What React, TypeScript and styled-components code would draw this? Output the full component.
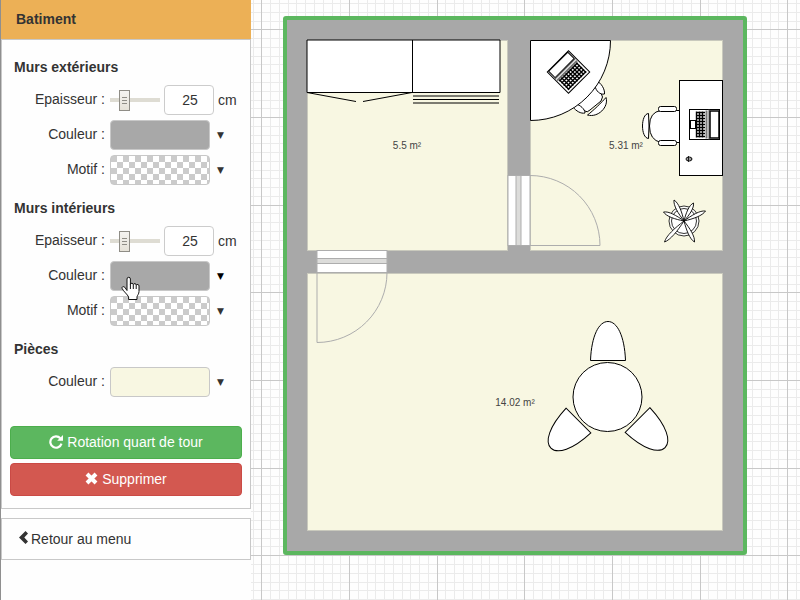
import React, { useId, useState } from "react";
import styled, { createGlobalStyle } from "styled-components";

const GlobalStyle = createGlobalStyle`
  *, *::before, *::after { box-sizing: border-box; }
  body {
    margin: 0;
    background: #fefefe;
    color: #333;
    font: 14px/20px "Liberation Sans", Arial, sans-serif;
  }
  button, input { font: inherit; color: inherit; }
`;

const Page = styled.div`
  display: flex;
  min-height: 100vh;
`;

const Sidebar = styled.aside`
  flex: 0 0 251px;
  border-left: 1px solid #8f8f8f;
  background: #fefefe;
`;

const Title = styled.h1`
  margin: 0;
  padding: 9px 15px 10px;
  background: #ecb056;
  font-size: 14px;
  line-height: 20px;
`;

const Panel = styled.section`
  padding: 17px 8px 12px;
  border: 1px solid #c8c8c8;
`;

const Group = styled.fieldset`
  display: flex;
  flex-direction: column;
  gap: 5px;
  min-width: 0;
  margin: 0 0 13px;
  padding: 0;
  border: 0;
`;

const Legend = styled.legend`
  padding: 0 4px 8px;
  font-weight: bold;
`;

const Row = styled.div`
  display: grid;
  grid-template-columns: 95px 1fr;
  column-gap: 5px;
  height: 30px;
`;

const Label = styled.label`
  padding-top: 4px;
  text-align: right;
`;

const Thickness = styled.div`
  display: flex;
  align-items: center;
  gap: 4px;
`;

const Slider = styled.input`
  appearance: none;
  width: 50px;
  height: 22px;
  margin: 0;
  background: linear-gradient(#dedcd3, #dedcd3) center / 100% 4px no-repeat;

  &::-webkit-slider-thumb {
    appearance: none;
    width: 11px;
    height: 21px;
    border: 1px solid #8f8d86;
    background:
      linear-gradient(#8f8d86, #8f8d86) center 6px / 5px 1px no-repeat,
      linear-gradient(#8f8d86, #8f8d86) center 9px / 5px 1px no-repeat,
      linear-gradient(#8f8d86, #8f8d86) center 12px / 5px 1px no-repeat,
      linear-gradient(#f4f3f0, #e6e2d8);
  }
`;

const SizeInput = styled.input`
  width: 50px;
  height: 30px;
  padding: 0 0 0 2px;
  border: 1px solid #ccc;
  border-radius: 4px;
  background: #fff;
  text-align: center;
`;

const Picker = styled.button`
  position: relative;
  display: flex;
  align-items: center;
  gap: 7px;
  padding: 0;
  border: 0;
  background: none;
  cursor: pointer;
`;

const Swatch = styled.span<{ $fill: string }>`
  width: 100px;
  height: 30px;
  border: 1px solid #c8c8c8;
  border-radius: 4px;
  background: ${(p) => p.$fill};
`;

const Caret = styled.span<{ $active?: boolean }>`
  color: ${(p) => (p.$active ? "#000" : "#333")};
  font: 9px/20px "DejaVu Sans", sans-serif;
`;

const Hand = styled.svg`
  position: absolute;
  left: 11px;
  top: 15px;
  z-index: 1;
`;

const Actions = styled.div`
  display: flex;
  flex-direction: column;
  gap: 4px;
  margin-top: 29px;
`;

const Action = styled.button<{ $tone: "success" | "danger" }>`
  display: flex;
  align-items: center;
  justify-content: center;
  gap: 4px;
  height: 33px;
  padding: 0 0 2px;
  border: 1px solid ${(p) => (p.$tone === "success" ? "#4cae4c" : "#ca4a45")};
  border-radius: 4px;
  background: ${(p) => (p.$tone === "success" ? "#5cb75f" : "#d35850")};
  color: #fff;
`;

const Back = styled.a`
  display: flex;
  align-items: center;
  gap: 3px;
  margin-top: 9px;
  padding: 10px 17px;
  border: 1px solid #c8c8c8;
  color: inherit;
  text-decoration: none;
`;

const BackIcon = styled.svg`
  margin-bottom: 4px;
`;

const Canvas = styled.main`
  flex: 1;
  min-width: 0;
  display: flex;
  overflow: hidden;
`;

const Drawing = styled.svg`
  flex: 1;
  min-width: 0;
  background: #fefefe;
`;

const AreaText = styled.text`
  font: 10px "Liberation Sans", Arial, sans-serif;
  fill: #444;
  text-anchor: middle;
`;

const CHECKER =
  "conic-gradient(#fff 25%, #cbcbcb 0 50%, #fff 0 75%, #cbcbcb 0) 0 0 / 12px 12px";

function ThicknessRow() {
  const id = useId();
  const [value, setValue] = useState("25");
  const change = (e: React.ChangeEvent<HTMLInputElement>) => setValue(e.target.value);
  return (
    <Row>
      <Label htmlFor={id}>Epaisseur :</Label>
      <Thickness>
        <Slider
          type="range"
          min={5}
          max={92}
          value={value}
          onChange={change}
          aria-label="Epaisseur"
        />
        <SizeInput id={id} value={value} onChange={change} />
        <span>cm</span>
      </Thickness>
    </Row>
  );
}

function PickerRow({ label, fill, hovered }: { label: string; fill: string; hovered?: boolean }) {
  const id = useId();
  return (
    <Row>
      <Label htmlFor={id}>{label} :</Label>
      <Picker id={id} type="button">
        <Swatch $fill={fill} />
        <Caret $active={hovered}>▼</Caret>
        {hovered && (
          <Hand width="20" height="25" viewBox="0 0 20 25" aria-hidden="true">
            <path
              d="M6 14.5V3a1.7 1.7 0 0 1 3.4 0v5.2a1.5 1.5 0 0 1 2.9.4 1.5 1.5 0 0 1 2.9.6 1.5 1.5 0 0 1 2.8.9v5.4c0 2.4-1.6 3.8-2 5.3v2.7H7.600v-2.500C6.600 18.500 2.500 15.500 1.200 12.600c-.8-1.800 1.200-2.600 2.600-1.300z"
              fill="#fff"
              stroke="#111"
              strokeLinejoin="round"
            />
            <path d="M9.4 8v5M12.3 8.600v4.400M15.200 9.200V13" stroke="#111" fill="none" />
          </Hand>
        )}
      </Picker>
    </Row>
  );
}

const MAJOR = 87.64;

function GridLines({ span, from }: { span: number; from: [number, number] }) {
  const count = 300;
  const step = MAJOR / 10;
  const pick = (major: boolean, vertical: boolean) =>
    Array.from({ length: count }, (_, i) => i)
      .filter((i) => (i % 10 === 0) === major)
      .map((i) => {
        const p = Math.round(from[vertical ? 0 : 1] + (i - 10) * step);
        return vertical ? `M${p} 0h1v${span}h-1z` : `M0 ${p}h${span}v1h-${span}z`;
      })
      .join("");
  return (
    <g shapeRendering="crispEdges">
      <path d={pick(false, true) + pick(false, false)} fill="#ebebeb" />
      <path d={pick(true, true) + pick(true, false)} fill="#c8c8c8" />
    </g>
  );
}

/* Laptop centred on the origin, screen towards +x. */
function Laptop({ compact }: { compact?: boolean }) {
  const left = compact ? -13 : -8.5;
  const width = compact ? 15 : 9;
  const rows = [-12, -9, -6, -3, 0, 3, 6, 9, 12];
  const cols = compact ? [-12, -9, -6, -3, 0] : [-8, -5, -2];
  return (
    <g stroke="#000" fill="#fff">
      <rect x="-15" y="-15" width="30" height="30" />
      {!compact && <rect x="-14" y="-4" width="5" height="8" />}
      <path
        d={
          cols.map((x) => `M${x} -13v26`).join("") +
          rows.map((y) => `M${left} ${y}h${width}`).join("")
        }
        strokeWidth="1.4"
      />
      <path d="M2 -14v28" stroke="#777" strokeWidth="2" />
      <path d="M4.500 -15v30" stroke="#555" />
      <rect x="5.500" y="-13.500" width="9" height="27" strokeWidth={compact ? 1 : 1.5} />
    </g>
  );
}

function Plant() {
  const tips = [
    [-10, -21], [9.5, -18], [21.5, -10], [-20.5, -9], [-19.5, 21], [10.5, 21],
  ];
  return (
    <g transform="translate(684 221)" fill="#fff" stroke="#000">
      <circle r="15" strokeWidth="0.8" />
      <circle r="12.5" strokeWidth="0.8" />
      {tips.map(([x, y]) => {
        const len = Math.hypot(x, y);
        const angle = (Math.atan2(y, x) * 180) / Math.PI;
        return (
          <path
            key={`${x},${y}`}
            transform={`rotate(${angle})`}
            d={`M0 0C${len * 0.4} -2 ${len * 0.8} -3 ${len} 0C${len * 0.8} 3 ${len * 0.4} 2 0 0z`}
            strokeWidth="0.8"
          />
        );
      })}
    </g>
  );
}

function Stool({ at }: { at: string }) {
  return (
    <path
      transform={at}
      d="M-17.5 0C-16.5 -25 -9 -39 0 -39S16.5 -25 17.5 0z"
      fill="#fff"
      stroke="#000"
    />
  );
}

function FloorPlan() {
  return (
    <Drawing role="img" aria-label="Plan du batiment">
      <g transform="translate(-251 0)">
        <GridLines span={2600} from={[261.4, 29.4]} />

        <rect x="285" y="18" width="460" height="535" rx="1" fill="#a8a8a8" stroke="#5cb75f" strokeWidth="4" />
        <g fill="#f8f7e2" stroke="#c9c9bd">
          <rect x="307.5" y="40.5" width="200" height="210" />
          <rect x="530.5" y="40.5" width="192" height="210" />
          <rect x="307.5" y="273.5" width="415" height="257" />
        </g>

        {/* doors */}
        <g stroke="#adadad" fill="#fff">
          <rect x="317" y="250.5" width="70" height="22" />
          <rect x="317" y="258.5" width="70" height="5" fill="#dcdcda" />
          <path d="M317 272.5V342.5A70 70 0 0 0 387 272.5" fill="none" />
          <rect x="508" y="175.5" width="22" height="70" />
          <rect x="516" y="175.5" width="5" height="70" fill="#dcdcda" />
          <path d="M530 245.5H600A70 70 0 0 0 530 175.5" fill="none" />
        </g>

        {/* cupboards */}
        <g fill="#fff" stroke="#000">
          <path d="M307 92.5V40H500V92.5z" />
          <path d="M412.5 40V92.5" />
          <path d="M307 92.5L356 101.5M412 92.5L363 101.5" fill="none" />
          <path d="M413 96h86M413 99.5h86M413 103h86" />
        </g>

        {/* corner desk with its chair */}
        <g fill="#fff" stroke="#000">
          <path d="M575 104L585 111Q587 113 590 110L601 101Q604 97 601 93L594 86z" />
          <path d="M597 81C601 83 605 89 604.5 94C600 95 596 91 595 86z" />
          <path d="M573 107C576 111 581 114 585 113C585 109 580 105 576 104z" />
          <path d="M587.5 115C593 111 602 102 606 97.5C609 107 598 118 587.5 115z" />
          <path d="M530.5 40.5H610.5A80 80 0 0 1 530.5 120.5z" />
        </g>
        <g transform="translate(568.5 72) rotate(-135)">
          <Laptop compact />
        </g>

        {/* straight desk with its chair */}
        <g fill="#fff" stroke="#000">
          <path d="M680 110.5H661Q649.5 112 649.5 126T661 142.500H680z" />
          <rect x="658.5" y="106.5" width="18" height="5" rx="2" />
          <rect x="658.5" y="140.5" width="18" height="5" rx="2" />
          <path d="M648.5 113.5C640.5 114 640.5 138 648.5 138.5Q649.5 126 648.5 113.5z" />
          <rect x="679.5" y="80.5" width="43" height="95" />
          <ellipse cx="689" cy="159" rx="3" ry="2" />
          <path d="M688.5 156v6M687 159h5" strokeWidth="0.8" />
        </g>
        <g transform="translate(704.5 124.5)">
          <Laptop />
        </g>

        <Plant />

        {/* round table */}
        <circle cx="607.5" cy="397" r="34.5" fill="#fff" stroke="#000" />
        <Stool at="translate(608 360.5)" />
        <Stool at="translate(578.5 420.5) rotate(-135)" />
        <Stool at="translate(637.5 420) rotate(135)" />

        <AreaText x="407" y="149">5.5 m²</AreaText>
        <AreaText x="626" y="149">5.31 m²</AreaText>
        <AreaText x="515" y="406">14.02 m²</AreaText>
      </g>
    </Drawing>
  );
}

export default function App() {
  return (
    <>
      <GlobalStyle />
      <Page>
        <Sidebar>
          <Title>Batiment</Title>
          <Panel>
            <Group>
              <Legend>Murs extérieurs</Legend>
              <ThicknessRow />
              <PickerRow label="Couleur" fill="#a8a8a8" />
              <PickerRow label="Motif" fill={CHECKER} />
            </Group>
            <Group>
              <Legend>Murs intérieurs</Legend>
              <ThicknessRow />
              <PickerRow label="Couleur" fill="#a8a8a8" hovered />
              <PickerRow label="Motif" fill={CHECKER} />
            </Group>
            <Group>
              <Legend>Pièces</Legend>
              <PickerRow label="Couleur" fill="#f8f7e2" />
            </Group>
            <Actions>
              <Action type="button" $tone="success">
                <svg width="14" height="14" viewBox="0 0 14 14" aria-hidden="true">
                  <path d="M11.3 3.2A5.700 5.700 0 1 0 12.5 8.700" fill="none" stroke="#fff" strokeWidth="2.2" />
                  <path d="M14 0v5.8H8.200z" fill="#fff" />
                </svg>
                Rotation quart de tour
              </Action>
              <Action type="button" $tone="danger">
                <svg width="13" height="13" viewBox="0 0 13 13" aria-hidden="true">
                  <path d="M2 2L11 11M11 2L2 11" stroke="#fff" strokeWidth="4" />
                </svg>
                Supprimer
              </Action>
            </Actions>
          </Panel>
          <Back href="#menu">
            <BackIcon width="9" height="13" viewBox="0 0 9 13" aria-hidden="true">
              <path d="M6.5 0L9 2.5L5.3 6.5L9 10.5L6.5 13L0 6.5z" fill="#333" />
            </BackIcon>
            Retour au menu
          </Back>
        </Sidebar>
        <Canvas>
          <FloorPlan />
        </Canvas>
      </Page>
    </>
  );
}
